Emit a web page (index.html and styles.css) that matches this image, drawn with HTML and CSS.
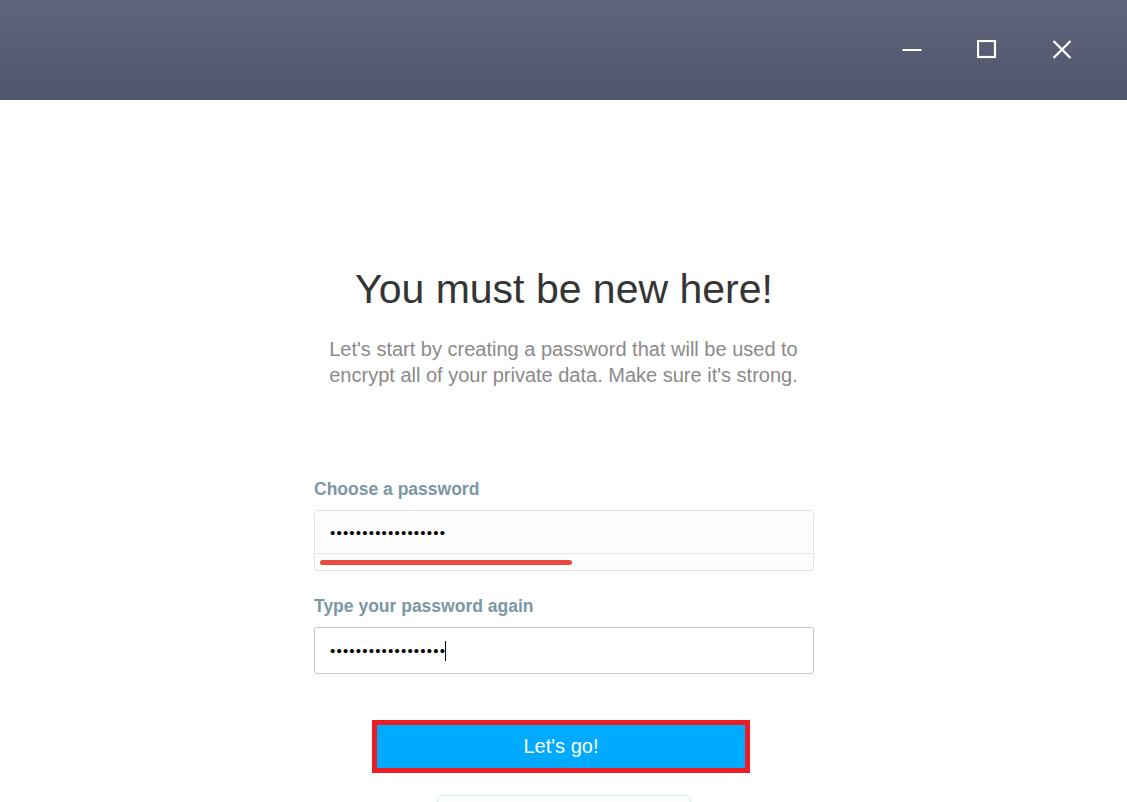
FILE: index.html
```html
<!DOCTYPE html>
<html>
<head>
<meta charset="utf-8">
<link rel="stylesheet" href="styles.css">
</head>
<body>
<header class="titlebar">
  <div class="controls">
    <span class="ctl"><svg width="20" height="20" viewBox="0 0 20 20"><rect x="0.5" y="9" width="19" height="2" fill="#fff"/></svg></span>
    <span class="ctl"><svg width="20" height="20" viewBox="0 0 20 20"><rect x="1" y="1" width="17" height="16" fill="none" stroke="#fff" stroke-width="2.2"/></svg></span>
    <span class="ctl"><svg width="20" height="20" viewBox="0 0 20 20"><path d="M1.5 1 L18.5 18 M18.5 1 L1.5 18" stroke="#fff" stroke-width="2.2" fill="none"/></svg></span>
  </div>
</header>
<main class="content">
  <h1 class="title">You must be new here!</h1>
  <p class="subtitle">Let's start by creating a password that will be used to<br>encrypt all of your private data. Make sure it's strong.</p>
  <form class="form">
    <label class="label">Choose a password</label>
    <div class="field field-strength">
      <div class="field-value"><span class="dots">••••••••••••••••••</span></div>
      <div class="strength"><div class="strength-bar" style="width:252px"></div></div>
    </div>
    <label class="label label-2">Type your password again</label>
    <div class="field field-plain">
      <div class="field-value"><span class="dots">••••••••••••••••••</span><span class="caret"></span></div>
    </div>
    <div class="actions">
      <button type="button" class="go">Let's go!</button>
    </div>
    <div class="secondary"></div>
  </form>
</main>
</body>
</html>
```
FILE: styles.css
```css
html, body {
  margin: 0;
  padding: 0;
  background: #fff;
  font-family: "Liberation Sans", Arial, sans-serif;
  overflow: hidden;
  height: 802px;
}
.titlebar {
  height: 100px;
  background: linear-gradient(to bottom, #61657b, #51556d);
  display: flex;
  justify-content: flex-end;
}
.controls {
  display: flex;
  padding-right: 28px;
}
.ctl {
  width: 75px;
  height: 100px;
  display: flex;
  align-items: center;
  justify-content: center;
}
.ctl svg { display: block; }
.content {
  display: flex;
  flex-direction: column;
  align-items: center;
}
.title {
  margin: 165px 0 0 0;
  font-size: 41px;
  line-height: 49px;
  font-weight: normal;
  color: #353535;
  padding-left: 1px;
}
.subtitle {
  margin: 22px 0 0 0;
  font-size: 20px;
  line-height: 26px;
  color: #8a8a8a;
  text-align: center;
}
.form {
  width: 500px;
  margin-top: 91px;
  display: flex;
  flex-direction: column;
  padding-left: 1px;
}
.label {
  font-size: 17.5px;
  line-height: 20px;
  font-weight: bold;
  color: #7a97a4;
  margin-bottom: 11px;
}
.label-2 { margin-top: 25px; }
.field {
  border-radius: 3px;
  box-sizing: border-box;
  background: #fdfdfd;
}
.field-strength {
  border: 1px solid #e2e2e2;
  height: 61px;
}
.field-plain {
  border: 1px solid #c6c6c6;
  height: 47px;
  background: #fff;
}
.field-value {
  height: 43px;
  display: flex;
  align-items: center;
  padding-left: 15px;
  box-sizing: border-box;
}
.field-strength .field-value {
  border-bottom: 1px solid #e6e6e6;
}
.field-plain .field-value { height: 45px; }
.dots {
  font-size: 15px;
  letter-spacing: 1.2px;
  color: #000;
  line-height: 1;
}
.caret {
  display: inline-block;
  width: 1px;
  height: 20px;
  background: #000;
  margin-left: -1px;
}
.strength {
  height: 16px;
  display: flex;
  align-items: center;
  padding-left: 5px;
}
.strength-bar {
  height: 5px;
  border-radius: 3px;
  background: #e84c3d;
}
.actions {
  margin-top: 46px;
  display: flex;
  justify-content: center;
  padding-right: 6px;
}
.go {
  width: 378px;
  height: 53px;
  border: 5px solid #ec1c24;
  background: #00aaff;
  color: #fff;
  font-family: "Liberation Sans", Arial, sans-serif;
  font-size: 20px;
  padding: 0;
  margin: 0;
}
.secondary {
  align-self: center;
  margin-left: 0;
  margin-top: 22px;
  width: 254px;
  height: 30px;
  border: 1px solid #cfe9fb;
  border-radius: 6px;
  background: #fbfdff;
  box-sizing: border-box;
}
```
